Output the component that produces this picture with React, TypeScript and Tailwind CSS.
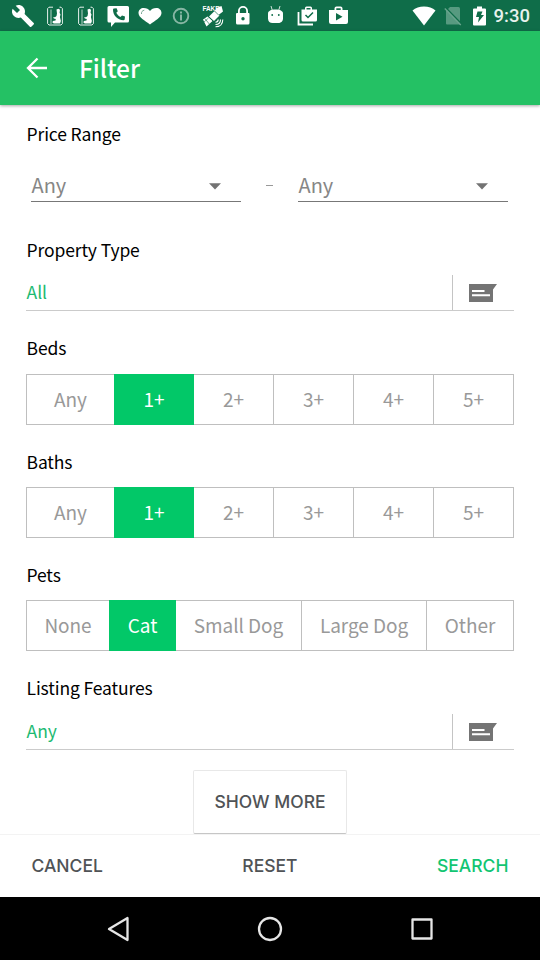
import React from "react";

const FONT = "font-['Noto_Sans_CJK_SC','Noto_Sans',sans-serif]";

function StatusIcon({ children, dim }: { children: React.ReactNode; dim?: boolean }) {
  return (
    <div className="flex w-[31.6px] shrink-0 justify-center">
      <svg viewBox="0 0 24 24" width="24" height="24" className={dim ? "text-white/50" : "text-white"} fill="currentColor">
        {children}
      </svg>
    </div>
  );
}

function Figure() {
  return (
    <StatusIcon>
      <path d="M10 3.200H6L4.600 4.600v15L6 21h12l1.400-1.400V4.600L18 3.200h-1.500" fill="none" stroke="currentColor" strokeWidth="0.9" />
      <path d="M8 5.500V20" stroke="currentColor" strokeWidth="0.7" />
      <path d="M13.500 5.500l2-.8 1.500 1-.4 3 .9 1.800-.6 2.500 1 4-.8 2.500H11l-1.500-.8.3-1.700 2.700-.5.3-1.500-2-.5-.5-1.500 1.700.3 1.500-1.300.5-2.500z" />
    </StatusIcon>
  );
}

function StatusBar() {
  return (
    <div className="flex h-[31px] items-center justify-between bg-[#0f6d49] pl-[7.5px] pr-[10px]">
      <div className="flex">
        <StatusIcon>
          <path d="M22.700 19l-9.100-9.100c.9-2.300.4-5-1.500-6.900-2-2-5-2.400-7.400-1.300L9 6 6 9 1.600 4.700C.4 7.100.9 10.100 2.900 12.100c1.900 1.900 4.600 2.400 6.900 1.500l9.100 9.100c.4.4 1 .4 1.400 0l2.300-2.300c.5-.4.5-1.100.1-1.400z" />
        </StatusIcon>
        <Figure />
        <Figure />
        <StatusIcon>
          <path d="M3 2h18.500a1.500 1.500 0 0 1 1.500 1.500v13.500a1.500 1.500 0 0 1-1.500 1.500H9l-4 4.500v-4.500H3A1.500 1.500 0 0 1 1.500 17V3.500A1.500 1.500 0 0 1 3 2z" />
          <path d="M8 4.500l2.600-.3 1.200 3-1.500 1.500c1 2 2.300 3.200 4.200 4.200l1.500-1.500 3 1.200-.3 2.600c-.1.700-.5 1-1.200 1C11.500 16 7 11.500 7 5.700c0-.7.300-1.100 1-1.200z" fill="#0f6d49" />
        </StatusIcon>
        <StatusIcon>
          <path d="M12 20.500C7 16.500.5 13.500.5 9c0-3 2.300-5 5.200-5C8.500 4 10.700 5 12 7c1.300-2 3.500-3 6.300-3 2.900 0 5.200 2 5.200 5 0 4.500-6.500 7.500-11.500 11.500z" />
          <path d="M3.500 10c-.3-2 .8-3.500 2.800-3.800" stroke="#79a995" strokeWidth="1" fill="none" />
        </StatusIcon>
        <StatusIcon dim>
          <circle cx="12" cy="12" r="7.300" fill="none" stroke="currentColor" strokeWidth="1.900" />
          <path d="M11 7.500h2v2h-2zM11 10.500h2v6h-2z" />
        </StatusIcon>
        <StatusIcon>
          <text x="1.500" y="6.800" fontSize="6.500" fontWeight="700" fontFamily="Liberation Sans" textLength="17">FAKE</text>
          <path d="M16.500 3.500l4-1.500 1.500 5.500-4.500 3.500-4-4zM2 15.500L6.500 12.500l5 4.500-6 5.500z" />
          <path d="M8 12.500l5.500-5.500 5 4.500-5.500 5.500z" />
          <path d="M7 12l5.500 5.500M13 6.500l5 5M3.800 14.500l4.500 5.500M2.500 18.500l5-4.500" stroke="#0f6d49" strokeWidth="0.6" />
          <path d="M14.500 18.200c1.500 0 2.700-1 2.700-2.700M14.500 20.500c3 0 5-2 5-5M14.500 22.800c4.500 0 7.300-3 7.300-7.300" fill="none" stroke="currentColor" strokeWidth="1.100" />
        </StatusIcon>
        <StatusIcon>
          <path d="M17 9h-1V7a5 5 0 0 0-10 0v2H5a1 1 0 0 0-1 1v9a1.500 1.500 0 0 0 1.500 1.500h10.500A1.500 1.500 0 0 0 17.500 19v-9a1 1 0 0 0-.5-1zM7.800 9V7a3.200 3.200 0 0 1 6.400 0v2zm3.200 7.500a1.700 1.700 0 1 1 0-3.400 1.700 1.700 0 0 1 0 3.400z" fillRule="evenodd" />
        </StatusIcon>
        <StatusIcon>
          <path d="M4 9.500C4 7 7 5.500 11.500 5.500S19 7 19 9.500v5c0 3-2.500 4.500-4.500 4.500h-6C6 19 4 17.500 4 14.500z" />
          <path d="M7 2l1.200 4M16 2l-1.200 4" stroke="currentColor" strokeWidth="0.8" />
          <circle cx="8.200" cy="11" r="0.9" fill="#0f6d49" />
          <circle cx="14.800" cy="11" r="0.9" fill="#0f6d49" />
        </StatusIcon>
        <StatusIcon>
          <path d="M2.500 8v12.500H17" fill="none" stroke="currentColor" strokeWidth="1.800" />
          <path d="M5.500 5.500H9V4A1.500 1.500 0 0 1 10.500 2.500h4A1.500 1.500 0 0 1 16 4v1.500h5v10.500a1.500 1.500 0 0 1-1.500 1.500H7A1.500 1.500 0 0 1 5.500 16zM10.500 4v1.500h4V4z" fillRule="evenodd" />
          <path d="M9.500 11l2.500 2.500 5-5" stroke="#0f6d49" strokeWidth="1.500" fill="none" />
        </StatusIcon>
        <StatusIcon>
          <path d="M2 6h5.500V4.500A2 2 0 0 1 9.500 2.500h4a2 2 0 0 1 2 2V6H21v12a2 2 0 0 1-2 2H4a2 2 0 0 1-2-2zM9.300 4.300V6h4.400V4.300zM9 9v7.500l6.500-3.800z" fillRule="evenodd" />
        </StatusIcon>
      </div>
      <div className="flex items-center">
        <svg width="24" height="20" viewBox="0 0 24 20" className="mr-[8px]" fill="#fff">
          <path d="M.5 4.500C3.500 1.800 7.500.5 12 .5s8.500 1.300 11.500 4L12 19.500z" />
        </svg>
        <svg width="18" height="20" viewBox="0 0 18 20" className="mr-[11px]">
          <path d="M6 1h8.500A1.500 1.500 0 0 1 16 2.500V18.500H3a1 1 0 0 1-1-1V5z" fill="#579a80" />
          <path d="M1.800 1.700l16 16.500" stroke="#0f6d49" strokeWidth="1.500" />
          <path d="M.8 2.500l16 16.500" stroke="#6aa58e" strokeWidth="1.300" />
        </svg>
        <svg width="13" height="20" viewBox="0 0 13 20" className="mr-[8px]">
          <path d="M4 .5h5v2h3a1 1 0 0 1 1 1v15a1 1 0 0 1-1 1H1a1 1 0 0 1-1-1v-15a1 1 0 0 1 1-1h3z" fill="#fff" />
          <path d="M4.500 5.500h5L8 9h3l-6 7.500 1-5.500H3z" fill="#0f6d49" />
        </svg>
        <span className="relative top-px font-[Roboto,sans-serif] text-[18.5px] font-medium leading-none text-[#e7f2ed]">9:30</span>
      </div>
    </div>
  );
}

function Label({ children }: { children: React.ReactNode }) {
  return <h2 className="flex h-6 items-center pl-[0.5px] text-[17.5px] leading-6 tracking-[-0.12px] text-black">{children}</h2>;
}

function PriceSelect() {
  return (
    <div className="flex h-[34px] w-[210px] items-center justify-between border-b border-[#777] pr-[20px] text-[20px] text-[#868686]">
      <span className="pl-[0.5px] pt-px leading-none">Any</span>
      <svg width="12" height="7" viewBox="0 0 12 7" className="relative top-[2px]" fill="#737373"><path d="M0 .3h12L6 6.500z" /></svg>
    </div>
  );
}

function PickerRow({ value }: { value: string }) {
  return (
    <div className="flex h-[36px] border-b border-[#cbcbcb] text-[17.5px] text-[#1dba72]">
      <span className="flex flex-1 items-center pl-[0.5px]">{value}</span>
      <div className="flex w-[62px] items-center border-l border-[#c4c4c4] pl-4">
        <svg width="28" height="18" viewBox="0 0 28 18">
          <path d="M0 0h28l-4 5.500V18H0z" fill="#747474" />
          <path d="M3 6h12.500v2H3zM3 10.300h18v2H3z" fill="#fff" />
        </svg>
      </div>
    </div>
  );
}

type Option = { label: string; width: string };

function Segments({ options, selected }: { options: Option[]; selected: number }) {
  return (
    <div className="flex h-[51px] w-[488px] border border-[#bfbfbf] text-[19px] tracking-[-0.05px]">
      {options.map((o, i) => (
        <div
          key={o.label}
          className={`${o.width} flex shrink-0 items-center justify-center ${
            i === selected
              ? "-my-px bg-[#02c868] text-white"
              : "text-[#999] " + (i > selected && i < options.length - 1 ? "border-r border-[#bfbfbf]" : "")
          }`}
        >
          {o.label}
        </div>
      ))}
    </div>
  );
}

const counts: Option[] = [
  { label: "Any", width: "w-[87px]" },
  { label: "1+", width: "w-[80px]" },
  { label: "2+", width: "w-[80px]" },
  { label: "3+", width: "w-[80px]" },
  { label: "4+", width: "w-[80px]" },
  { label: "5+", width: "w-[79px]" },
];

const pets: Option[] = [
  { label: "None", width: "w-[82px]" },
  { label: "Cat", width: "w-[67px]" },
  { label: "Small Dog", width: "w-[126px]" },
  { label: "Large Dog", width: "w-[125px]" },
  { label: "Other", width: "w-[86px]" },
];

export default function App() {
  return (
    <div className={`flex h-[960px] w-[540px] flex-col overflow-hidden bg-white ${FONT}`}>
      <StatusBar />
      <header className="z-10 flex h-[74px] shrink-0 items-center bg-[#24c164] pl-[26px] shadow-[0_1px_3px_rgba(0,0,0,0.35)]">
        <svg width="22" height="22" viewBox="0 0 22 22" fill="none" stroke="#fff" strokeWidth="2.300">
          <path d="M21 11H2M11.500 1.500L2 11l9.500 9.500" />
        </svg>
        <h1 className="ml-[31px] text-[24.500px] font-medium tracking-[-0.1px] text-white">Filter</h1>
      </header>

      <main className="flex h-[729px] shrink-0 flex-col px-[26px] pt-[17px]">
        <Label>Price Range</Label>
        <div className="mt-[22px] flex h-[34px] items-center pl-[5px]">
          <PriceSelect />
          <span className="flex w-[57px] justify-center"><span className="h-px w-[7px] bg-[#999]" /></span>
          <PriceSelect />
        </div>
        <div className="mt-[36px]"><Label>Property Type</Label></div>
        <div className="mt-[13px]"><PickerRow value="All" /></div>
        <div className="mt-[25px]"><Label>Beds</Label></div>
        <div className="mt-[14px]"><Segments options={counts} selected={1} /></div>
        <div className="mt-[25px]"><Label>Baths</Label></div>
        <div className="mt-[13px]"><Segments options={counts} selected={1} /></div>
        <div className="mt-[25px]"><Label>Pets</Label></div>
        <div className="mt-[13px]"><Segments options={pets} selected={1} /></div>
        <div className="mt-[25px]"><Label>Listing Features</Label></div>
        <div className="mt-[14px]"><PickerRow value="Any" /></div>
        <button className="mt-[20px] flex h-[64px] w-[154px] shrink-0 items-center justify-center self-center rounded-[2px] border border-[#e8e8e8] border-b-[#c6c6c6] pt-px font-[Inter,sans-serif] text-[17.5px] font-medium text-[#505356]">
          SHOW MORE
        </button>
      </main>

      <footer className="flex h-[63px] shrink-0 items-center justify-between border-t border-[#f3f3f3] px-[31.500px] font-[Inter,sans-serif] text-[17.5px] font-medium text-[#505356]">
        <span>CANCEL</span>
        <span>RESET</span>
        <span className="text-[#12c572]">SEARCH</span>
      </footer>

      <nav className="flex h-[63px] shrink-0 items-center bg-black pl-[106px]">
        <svg width="24" height="26" viewBox="0 0 24 26" fill="none" stroke="#e6e6e6" strokeWidth="2.300" strokeLinejoin="round">
          <path d="M3 13L21.500 2v22z" />
        </svg>
        <svg width="26" height="26" viewBox="0 0 26 26" className="ml-[127px]" fill="none" stroke="#e6e6e6" strokeWidth="2.300">
          <circle cx="13" cy="13" r="11" />
        </svg>
        <svg width="24" height="24" viewBox="0 0 24 24" className="ml-[127px]" fill="none" stroke="#e6e6e6" strokeWidth="2.300" strokeLinejoin="round">
          <path d="M2.500 2.500h19v19h-19z" />
        </svg>
      </nav>
    </div>
  );
}
